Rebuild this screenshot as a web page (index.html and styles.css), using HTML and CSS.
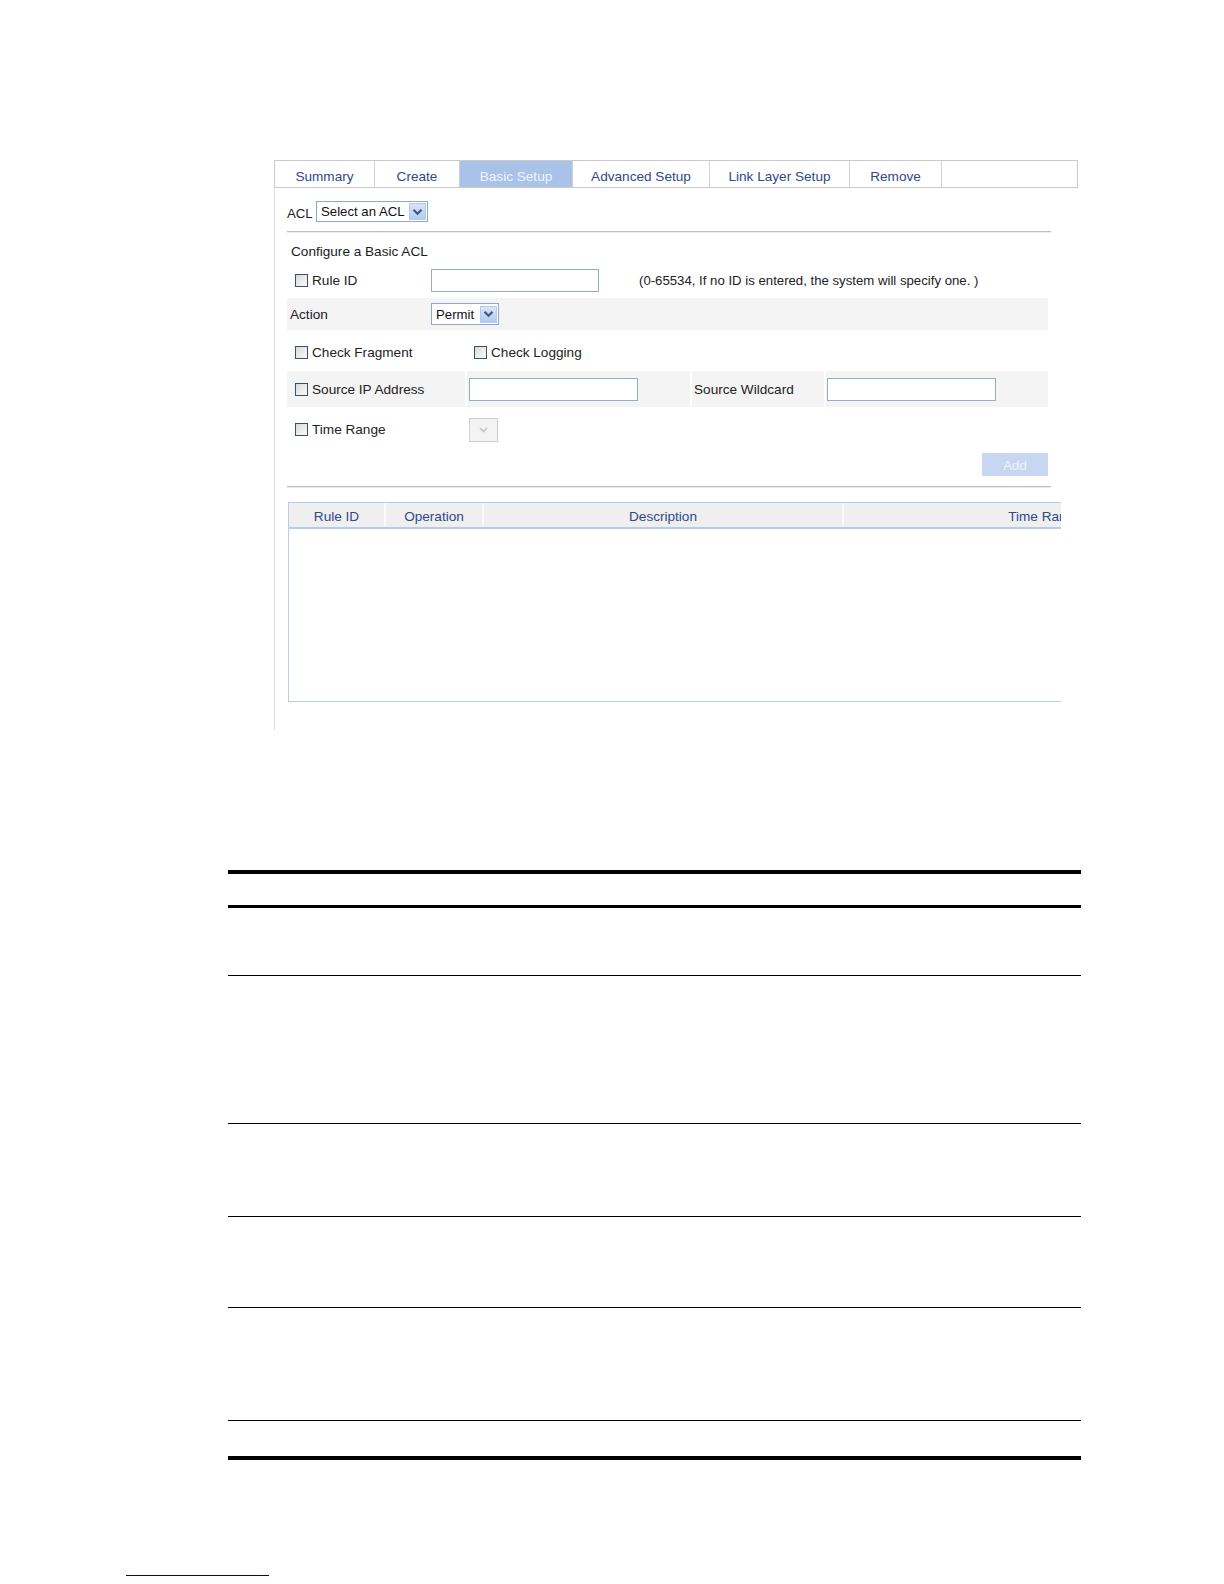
FILE: index.html
```html
<!DOCTYPE html>
<html lang="en">
<head>
<meta charset="utf-8">
<title>Basic ACL Setup</title>
<link rel="stylesheet" href="styles.css">
</head>
<body>
<div class="page">
  <div class="panel">
    <div class="tabs">
      <div class="tab w-summary">Summary</div>
      <div class="tab w-create">Create</div>
      <div class="tab w-basic active">Basic Setup</div>
      <div class="tab w-adv">Advanced Setup</div>
      <div class="tab w-link">Link Layer Setup</div>
      <div class="tab w-remove">Remove</div>
      <div class="tab tab-fill"></div>
    </div>
    <div class="panel-body">
      <div class="acl-row">
        <span class="acl-label">ACL</span>
        <div class="select sel-acl">
          <span class="sel-text">Select an ACL</span>
          <span class="sel-btn"><svg width="11" height="8" viewBox="0 0 11 8"><polyline points="1.5,1.8 5.5,5.8 9.5,1.8" fill="none" stroke="#41587f" stroke-width="2.2"/></svg></span>
        </div>
      </div>
      <div class="divider"></div>
      <div class="section-title">Configure a Basic ACL</div>
      <div class="form">
        <div class="row row-rule">
          <div class="cell c-rule"><span class="cb"></span><span class="lbl">Rule ID</span></div>
          <div class="cell c-ruleinput"><span class="input in-rule"></span></div>
          <div class="cell hint">(0-65534, If no ID is entered, the system will specify one. )</div>
        </div>
        <div class="row row-action shaded">
          <div class="cell c-action"><span class="lbl">Action</span></div>
          <div class="cell">
            <div class="select sel-permit">
              <span class="sel-text">Permit</span>
              <span class="sel-btn"><svg width="11" height="8" viewBox="0 0 11 8"><polyline points="1.5,1.8 5.5,5.8 9.5,1.8" fill="none" stroke="#41587f" stroke-width="2.2"/></svg></span>
            </div>
          </div>
        </div>
        <div class="row row-check">
          <div class="cell c-frag"><span class="cb"></span><span class="lbl">Check Fragment</span></div>
          <div class="cell"><span class="cb"></span><span class="lbl">Check Logging</span></div>
        </div>
        <div class="row row-src">
          <div class="cell shaded c-src"><span class="cb"></span><span class="lbl">Source IP Address</span></div>
          <div class="cell shaded c-srcin"><span class="input in-src"></span></div>
          <div class="cell shaded c-wild"><span class="lbl">Source Wildcard</span></div>
          <div class="cell shaded c-wildin"><span class="input in-src"></span></div>
        </div>
        <div class="row row-time">
          <div class="cell c-time"><span class="cb"></span><span class="lbl">Time Range</span></div>
          <div class="cell">
            <div class="select-disabled"><svg width="11" height="8" viewBox="0 0 11 8"><polyline points="2,2 5.5,5.5 9,2" fill="none" stroke="#c4c4c4" stroke-width="1.6"/></svg></div>
          </div>
        </div>
        <div class="row row-add">
          <button class="btn-add" type="button">Add</button>
        </div>
      </div>
      <div class="divider divider-2"></div>
      <div class="grid-wrap">
        <div class="grid">
          <div class="grid-head">
            <div class="gh col-id">Rule ID</div>
            <div class="gh col-op">Operation</div>
            <div class="gh col-desc">Description</div>
            <div class="gh col-time">Time Range</div>
          </div>
          <div class="grid-body"></div>
        </div>
      </div>
    </div>
  </div>

  <div class="doc-table">
    <div class="dt-head"></div>
    <div class="dt-row r1"></div>
    <div class="dt-row r2"></div>
    <div class="dt-row r3"></div>
    <div class="dt-row r4"></div>
    <div class="dt-row r5"></div>
    <div class="dt-row r6 last"></div>
  </div>

  <div class="footnote-rule"></div>
</div>
</body>
</html>
```

FILE: styles.css
```css
html, body {
  margin: 0;
  padding: 0;
  background: #ffffff;
}

body {
  font-family: "Liberation Sans", Arial, sans-serif;
  color: #1b1b1b;
  width: 1224px;
  height: 1584px;
  overflow: hidden;
}

.page {
  padding-top: 160px;
}

/* ---------- panel ---------- */
.panel {
  margin-left: 274px;
  width: 804px;
}

.tabs {
  display: flex;
  height: 28px;
  box-sizing: border-box;
  border: 1px solid #cacaca;
  background: #ffffff;
}

.tab {
  box-sizing: border-box;
  height: 100%;
  display: flex;
  align-items: center;
  justify-content: center;
  font-size: 13.6px;
  color: #2d4a8a;
  border-right: 1px solid #d2d2d2;
  padding-top: 5px;
}

.w-summary { width: 100px; }
.w-create { width: 85px; }
.w-basic { width: 113px; }
.w-adv { width: 137px; }
.w-link { width: 140px; }
.w-remove { width: 92px; }
.tab-fill { flex: 1; border-right: none; }

.tab.active {
  background: #a9c3e8;
  color: #eef3fb;
}

.panel-body {
  width: 787px;
  height: 542px;
  box-sizing: border-box;
  border-left: 1px solid #dedede;
  padding-left: 12px;
  overflow: hidden;
}

/* ---------- ACL row ---------- */
.acl-row {
  display: flex;
  align-items: flex-end;
  margin-top: 13px;
  height: 21px;
}

.acl-label {
  font-size: 13.2px;
  width: 29px;
  line-height: 14px;
  padding-bottom: 1px;
}

.select {
  display: flex;
  align-items: center;
  box-sizing: border-box;
  border: 1px solid #8ea8c8;
  background: #ffffff;
  padding-left: 4px;
  font-size: 13.2px;
  color: #111;
}

.sel-acl { width: 112px; height: 21px; }
.sel-permit { width: 68px; height: 22px; }

.sel-text { flex: 1; white-space: nowrap; }

.sel-btn {
  width: 17px;
  height: 17px;
  margin-right: 1px;
  box-sizing: border-box;
  border: 1px solid #b4c9ee;
  background: linear-gradient(#d8e4fa, #b5cbf2);
  display: flex;
  align-items: center;
  justify-content: center;
}

.divider {
  margin-top: 9px;
  width: 764px;
  height: 1px;
  background: #bdbdbd;
  border-bottom: 1px solid #ececec;
}

.section-title {
  margin-top: 11px;
  margin-left: 4px;
  font-size: 13.6px;
  line-height: 16px;
}

/* ---------- form ---------- */
.form {
  width: 761px;
  margin-top: 6px;
  display: flex;
  flex-direction: column;
}

.row {
  display: flex;
  align-items: stretch;
}

.cell {
  display: flex;
  align-items: center;
  box-sizing: border-box;
}

.shaded { background: #f4f4f4; }

.lbl { font-size: 13.6px; white-space: nowrap; color: #222; }

.cb {
  width: 13px;
  height: 13px;
  box-sizing: border-box;
  border: 1px solid #3a4f6a;
  background: linear-gradient(135deg, #d9d9d4, #fbfbfb);
  margin-right: 4px;
  flex: none;
}

.input {
  display: block;
  box-sizing: border-box;
  height: 23px;
  border: 1px solid #94adcb;
  background: #ffffff;
}

.row-rule { height: 28px; }
.c-rule { width: 144px; padding-left: 8px; }
.c-ruleinput { width: 208px; }
.in-rule { width: 168px; }
.hint { font-size: 13.2px; white-space: nowrap; color: #222; }

.row-action { height: 32px; margin-top: 4px; }
.c-action { width: 144px; padding-left: 3px; }

.row-check { height: 33px; margin-top: 6px; }
.c-frag { width: 187px; padding-left: 8px; }

.row-src { height: 36px; margin-top: 2px; gap: 2px; }
.c-src { width: 178px; padding-left: 8px; }
.c-srcin { width: 223px; padding-left: 2px; }
.c-wild { width: 132px; padding-left: 2px; }
.c-wildin { flex: 1; padding-left: 1px; }
.in-src { width: 169px; }

.row-time { height: 35px; margin-top: 5px; }
.c-time { width: 182px; padding-left: 8px; }

.select-disabled {
  width: 29px;
  height: 24px;
  box-sizing: border-box;
  border: 1px solid #cfcfcf;
  background: #f3f3f3;
  display: flex;
  align-items: center;
  justify-content: center;
}

.row-add {
  margin-top: 6px;
  justify-content: flex-end;
}

.btn-add {
  width: 66px;
  height: 23px;
  border: none;
  background: #c7d7f1;
  color: #eef3fb;
  font-family: "Liberation Sans", Arial, sans-serif;
  font-size: 13.2px;
  padding: 2px 0 0;
  margin: 0;
}

.divider-2 { margin-top: 10px; }

/* ---------- grid ---------- */
.grid-wrap {
  margin-top: 14px;
  margin-left: 1px;
}

.grid {
  width: 980px;
  height: 200px;
  box-sizing: border-box;
  border: 1px solid #b9cde6;
  background: #ffffff;
}

.grid-head {
  display: flex;
  height: 26px;
  box-sizing: border-box;
  background: #efefef;
  border-bottom: 2px solid #b7cbe8;
}

.gh {
  box-sizing: border-box;
  display: flex;
  align-items: center;
  justify-content: center;
  font-size: 13.6px;
  color: #2d4a8a;
  border-right: 2px solid #fafafa;
  padding-top: 2px;
}

.col-id { width: 97px; }
.col-op { width: 98px; }
.col-desc { width: 360px; }
.col-time { width: 404px; }

/* ---------- document table ---------- */
.doc-table {
  margin-top: 140px;
  margin-left: 228px;
  width: 853px;
  border-top: 4px solid #000;
}

.dt-head {
  height: 31px;
  border-bottom: 3px solid #000;
}

.dt-row {
  border-bottom: 1px solid #000;
}

.r1 { height: 67px; }
.r2 { height: 147px; }
.r3 { height: 92px; }
.r4 { height: 90px; }
.r5 { height: 112px; }
.r6 { height: 35px; }
.dt-row.last { border-bottom: 4px solid #000; }

.footnote-rule {
  margin-top: 115px;
  margin-left: 126px;
  width: 143px;
  height: 1px;
  border-top: 1px solid #0000a0;
}
```
